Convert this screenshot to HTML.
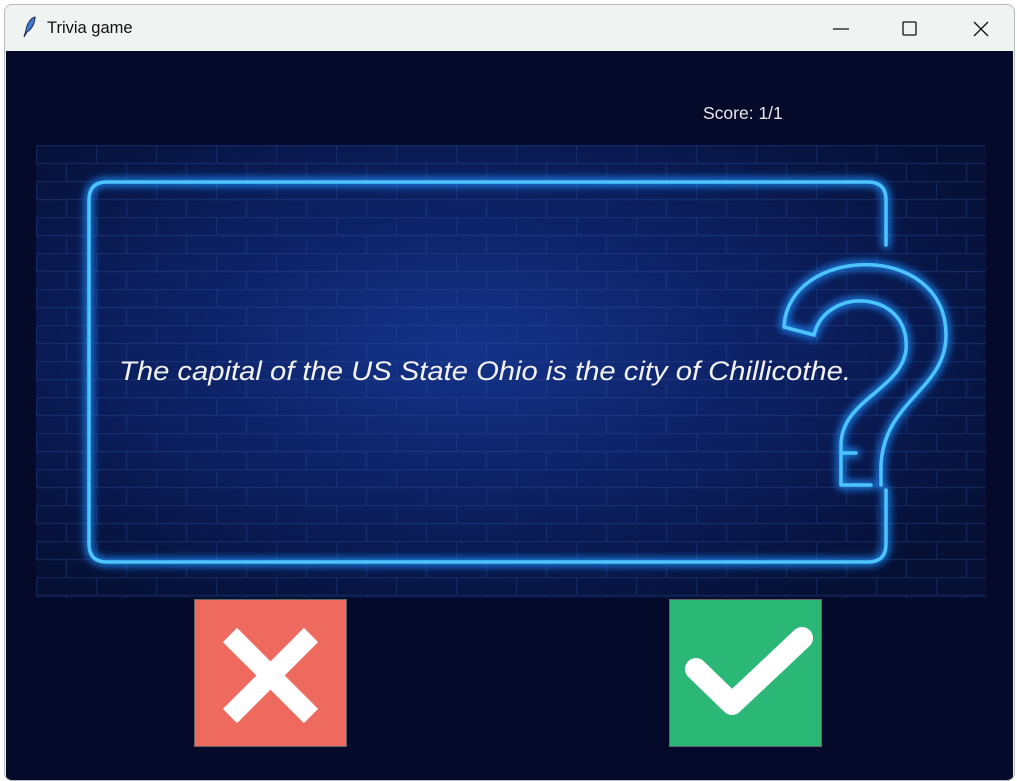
<!DOCTYPE html>
<html><head><style>
body{margin:0;width:1017px;height:781px;background:#fff;overflow:hidden;font-family:"Liberation Sans",sans-serif}
.win{position:absolute;left:4px;top:4px;width:1009px;height:775px;border:1px solid #b9bcbd;border-radius:8px;background:#eff3f1;overflow:hidden}
.title{position:absolute;left:42px;top:14px;font-size:16.5px;color:#111}
.content{position:absolute;left:1px;top:46px;width:1007px;height:729px;background:#050a2a}
.score{position:absolute;left:697px;top:52px;color:#e8e8ee;font-size:17.5px}
.img{position:absolute;left:30px;top:94px;width:950px;height:453px}
.btn{position:absolute;top:548px;width:151px;height:146px;border:1px solid #666}
</style></head><body>
<div class="win">
<svg style="position:absolute;left:16px;top:11px" width="16" height="22" viewBox="0 0 16 22"><path d="M3 21 L5 14 C6 7 10 2 14 1 C14 7 11 13 6 16 Z" fill="#3f7bd0" stroke="#1c2f55" stroke-width="1"/></svg>
<div class="title">Trivia game</div>
<svg style="position:absolute;left:828px;top:12px" width="170" height="24"><path d="M0 12h16" stroke="#111" stroke-width="1.2"/><rect x="70" y="5" width="13" height="13" fill="none" stroke="#111" stroke-width="1.3" rx="1"/><path d="M141 5l14 14M155 5l-14 14" stroke="#111" stroke-width="1.3"/></svg>
<div class="content">
<div class="score">Score: 1/1</div>
<svg class="img" viewBox="0 0 950 453">
<defs>
<radialGradient id="g" cx="0.45" cy="0.45" r="0.65"><stop offset="0" stop-color="#14338a"/><stop offset="0.6" stop-color="#0b1d5a"/><stop offset="1" stop-color="#061035"/></radialGradient>
<pattern id="b" width="60" height="36" patternUnits="userSpaceOnUse"><path d="M0 0.5h60M0 18.5h60M0.5 0v18M30.5 18v18" stroke="#2c4f9a" stroke-width="1.5" opacity="0.3" fill="none"/></pattern>
<filter id="gl"><feGaussianBlur stdDeviation="4"/></filter>
</defs>
<rect width="950" height="453" fill="url(#g)"/>
<rect width="950" height="453" fill="url(#b)"/>
<g fill="none" stroke-linecap="round">
<g stroke="#1e90ff" stroke-width="9" filter="url(#gl)" opacity="0.8">
<path d="M850 100 V55 Q850 37 832 37 H71 Q53 37 53 55 V399 Q53 417 71 417 H832 Q850 417 850 399 V345"/>
<path d="M748 182 C752 100 910 95 910 190 C910 245 848 255 845 320 V340 M805 308 H820 M805 340 H835 M748 182 L778 190 C790 140 875 145 870 205 C865 245 805 255 805 300 V340"/>
</g>
<g stroke="#4ec4ff" stroke-width="3.5">
<path d="M850 100 V55 Q850 37 832 37 H71 Q53 37 53 55 V399 Q53 417 71 417 H832 Q850 417 850 399 V345"/>
<path d="M748 182 C752 100 910 95 910 190 C910 245 848 255 845 320 V340 M805 308 H820 M805 340 H835 M748 182 L778 190 C790 140 875 145 870 205 C865 245 805 255 805 300 V340"/>
</g>
</g>
<text x="83" y="235" font-family="Liberation Sans" font-style="italic" font-size="27" textLength="732" lengthAdjust="spacingAndGlyphs" fill="#f2f2f2">The capital of the US State Ohio is the city of Chillicothe.</text>
</svg>
<div class="btn" style="left:188px;background:#ee6a5f"><svg width="151" height="146"><path d="M35 35L116 116M116 35L35 116" stroke="#fff" stroke-width="20"/></svg></div>
<div class="btn" style="left:663px;background:#2bb877"><svg width="151" height="146"><path d="M26 69L62 104L132 38" stroke="#fff" stroke-width="22" fill="none" stroke-linecap="round" stroke-linejoin="round"/></svg></div>
</div>
</div>
</body></html>
